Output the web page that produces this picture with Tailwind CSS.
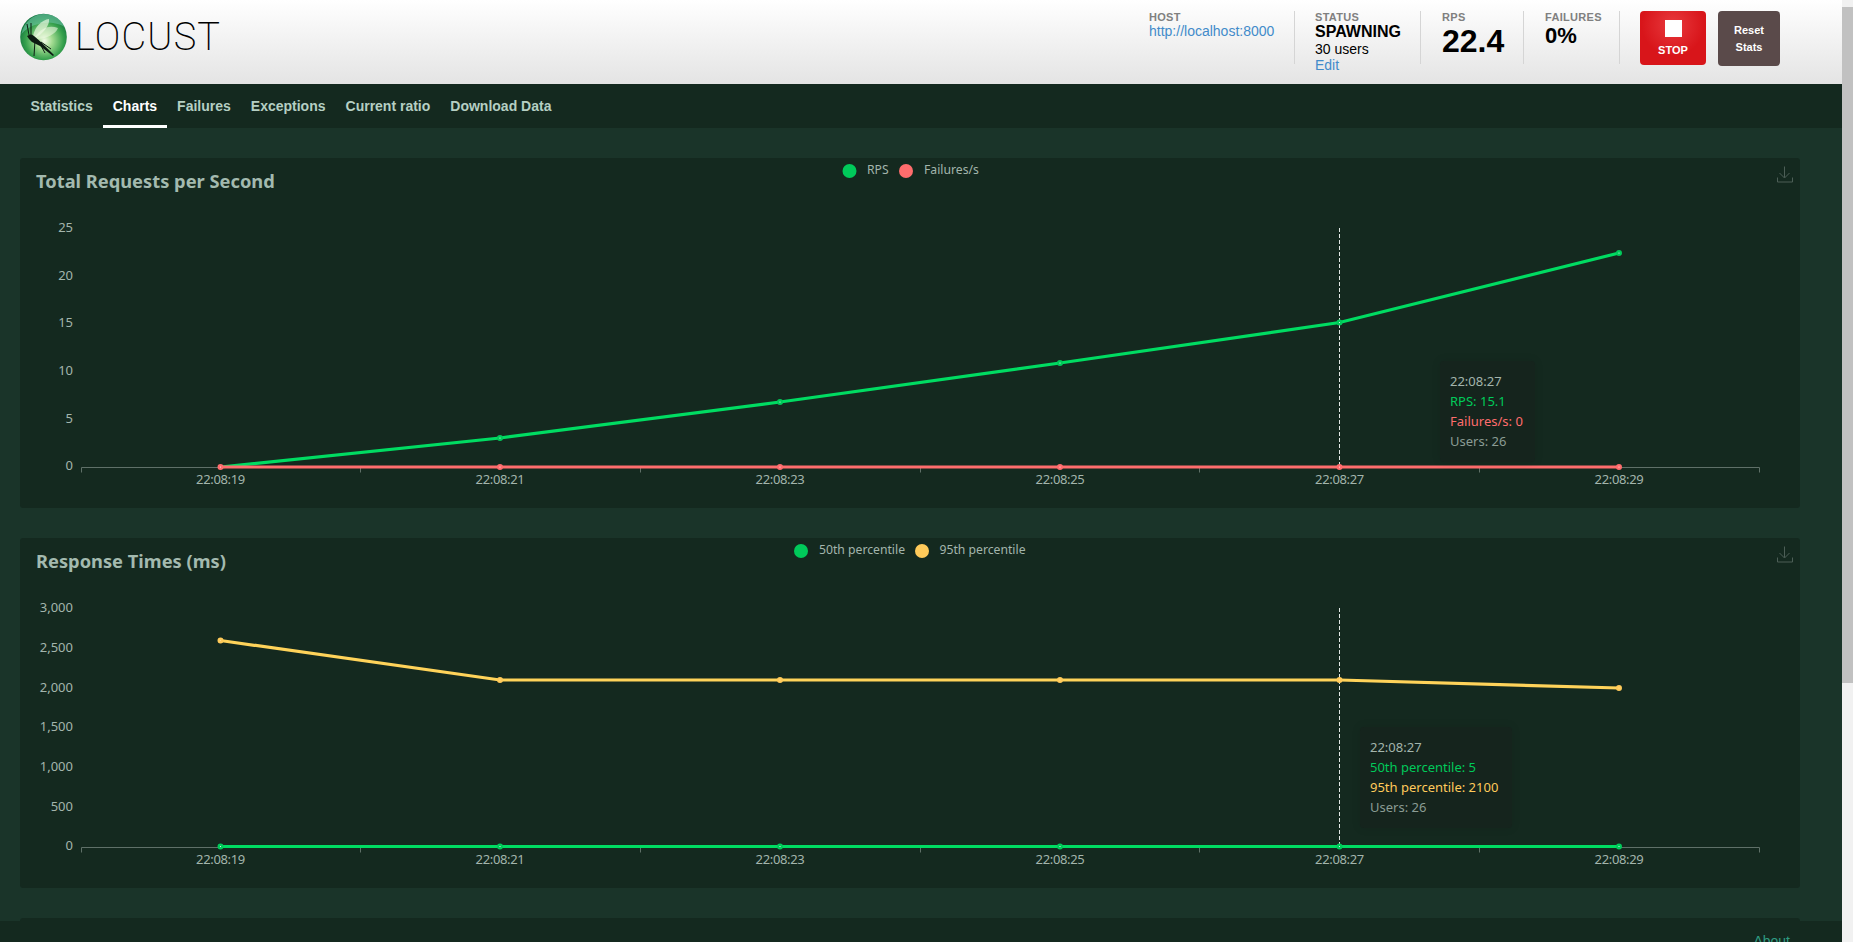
<!DOCTYPE html>
<html>
<head>
<meta charset="utf-8">
<script src="https://cdn.jsdelivr.net/npm/@tailwindcss/browser@4"></script>
</head>
<body class="h-[942px] w-[1853px] overflow-hidden flex bg-[#1a3429] font-['Liberation_Sans',sans-serif]">
<div class="relative flex-1 h-[942px] overflow-hidden flex flex-col">
  <header class="h-[84px] shrink-0 bg-gradient-to-b from-white to-[#e4e4e4] flex justify-between">
    <div class="flex items-center pl-[20px] gap-[8px] h-[74px]">
      <svg width="47" height="48" viewBox="0 0 47 48">
        <defs>
          <radialGradient id="orb" cx="0.52" cy="0.58" r="0.6"><stop offset="0" stop-color="#f4fbe9"/><stop offset="0.28" stop-color="#a4dc92"/><stop offset="0.68" stop-color="#35a04c"/><stop offset="1" stop-color="#0d6c3c"/></radialGradient>
        </defs>
        <circle cx="23.5" cy="24" r="23.3" fill="url(#orb)"/>
        <path d="M1.500 21C4 9 13 1 24 1c9 0 17 5 20.500 13C36 8 14 7 1.500 21z" fill="#6cc4a4" opacity=".6"/>
        <path d="M13 23C15 13 22 7 29 6c1 6-6 15-14 19z" fill="#e8f6de" opacity=".7"/>
        <path d="M15 24C22 14 30 12 38 15c-2 6-12 11-21 11z" fill="#f4fbe9" opacity=".55"/>
        <path d="M7 23l4-2 3 2 8 7 12 12-1 1-13-10-8-4-3-3z" fill="#0c1a12"/>
        <path d="M9 22L7 11M11 21L11 10M15 27L14 43M19 29L25 40M21 29L31 36" stroke="#0c1a12" stroke-width="1" fill="none"/>
      </svg>
      <span class="font-['Roboto',sans-serif] font-extralight text-[38px] leading-none tracking-[1.2px] text-black">LOCUST</span>
    </div>
    <div class="flex items-start pt-[11px] pr-[62px]">
      <div class="w-[147px] pl-[1px] h-[53px] border-r border-[#d5d5d5] flex flex-col">
        <span class="text-[11px] leading-[12px] font-bold tracking-[0.3px] text-[#808080]">HOST</span>
        <a class="text-[14px] leading-[16px] text-[#428bca]">http://localhost:8000</a>
      </div>
      <div class="w-[126px] pl-[20px] h-[53px] border-r border-[#d5d5d5] flex flex-col">
        <span class="text-[11px] leading-[12px] font-bold tracking-[0.3px] text-[#808080]">STATUS</span>
        <span class="text-[16px] leading-[17px] font-bold text-black">SPAWNING</span>
        <span class="text-[14px] leading-[18px] text-black">30 users</span>
        <a class="text-[14px] leading-[15px] text-[#428bca]">Edit</a>
      </div>
      <div class="w-[103px] pl-[21px] h-[53px] border-r border-[#d5d5d5] flex flex-col">
        <span class="text-[11px] leading-[12px] font-bold tracking-[0.3px] text-[#808080]">RPS</span>
        <span class="text-[32px] leading-[36px] font-bold text-black">22.4</span>
      </div>
      <div class="w-[96px] pl-[21px] h-[53px] border-r border-[#d5d5d5] flex flex-col">
        <span class="text-[11px] leading-[12px] font-bold tracking-[0.3px] text-[#808080]">FAILURES</span>
        <span class="text-[22px] leading-[26px] font-bold text-black">0%</span>
      </div>
      <div class="ml-[20px] w-[66px] h-[54px] rounded-[4px] bg-[radial-gradient(circle_at_50%_25%,#e8393d,#d8151a_60%)] flex flex-col items-center pt-[9px]">
        <div class="w-[17px] h-[17px] bg-white"></div>
        <span class="mt-[7px] text-[11px] leading-[13px] font-bold text-white">STOP</span>
      </div>
      <div class="ml-[12px] w-[62px] h-[55px] rounded-[4px] bg-[#5a4a4a] flex flex-col items-center justify-center gap-[4px] pt-[1px]">
        <span class="text-[11px] leading-[13px] font-bold text-white">Reset</span>
        <span class="text-[11px] leading-[13px] font-bold text-white">Stats</span>
      </div>
    </div>
  </header>
  <nav class="h-[44px] shrink-0 bg-[#14291f] flex pl-[20.5px] text-[14px] font-bold text-[#b5cfc3]">
    <a class="px-[10px] pt-[12px]">Statistics</a>
    <a class="px-[10px] pt-[12px] text-white border-b-[3px] border-white">Charts</a>
    <a class="px-[10px] pt-[12px]">Failures</a>
    <a class="px-[10px] pt-[12px]">Exceptions</a>
    <a class="px-[10px] pt-[12px]">Current ratio</a>
    <a class="px-[10px] pt-[12px]">Download Data</a>
  </nav>
  <main class="pt-[30px] pl-[20px] pr-[42px] flex flex-col gap-[30px]">
    <section class="relative h-[350px] shrink-0 rounded-[3px] bg-[#14291f] font-['Noto_Sans',sans-serif]">
      <svg class="absolute left-0 top-0" width="1780" height="350" viewBox="20 158 1780 350" font-size="13" fill="#a3b5ac">
        <text x="36" y="187.500" font-size="18.300" font-weight="700" fill="#a3baaf">Total Requests per Second</text>
        <circle cx="849.500" cy="171" r="7" fill="#00ca5a"/><text x="867" y="174" font-size="12.200">RPS</text>
        <circle cx="906" cy="171" r="7" fill="#ff6d6d"/><text x="924" y="174" font-size="12.200">Failures/s</text>
        <g transform="translate(1777 166.500)" fill="none" stroke="#4d5f57" stroke-width="1"><path d="M7.500 0v11M2.500 6.500l5 5 5-5M.5 11v4.500h15V11"/></g>
        <g text-anchor="end">
          <text x="73" y="232.200">25</text><text x="73" y="279.800">20</text><text x="73" y="327.400">15</text><text x="73" y="375">10</text><text x="73" y="422.600">5</text><text x="73" y="470.200">0</text>
        </g>
        <path d="M81.500 467.500H1759.500M81.500 467.500v5M360.500 467.500v5M640.500 467.500v5M920.500 467.500v5M1199.500 467.500v5M1479.500 467.500v5M1759.500 467.500v5" stroke="#5f7068" fill="none"/>
        <path d="M1339.500 228V467" stroke="#e0e6e3" stroke-dasharray="4 2" fill="none"/>
        <polyline points="220.500,467 500,438 780,402 1060,363 1339.500,322.500 1619,253" fill="none" stroke="#00dc62" stroke-width="3.200"/>
        <polyline points="220.500,467 500,467 780,467 1060,467 1339.500,467 1619,467" fill="none" stroke="#ff6d6d" stroke-width="3.200"/>
        <g fill="#e8fff0" stroke="#00ca5a" stroke-width="2.400"><circle cx="500" cy="438" r="1.800"/><circle cx="780" cy="402" r="1.800"/><circle cx="1060" cy="363" r="1.800"/><circle cx="1339.500" cy="322.500" r="1.800"/><circle cx="1619" cy="253" r="1.800"/></g>
        <g fill="#ffe9e9" stroke="#ff6d6d" stroke-width="2.400"><circle cx="220.500" cy="467" r="1.800"/><circle cx="500" cy="467" r="1.800"/><circle cx="780" cy="467" r="1.800"/><circle cx="1060" cy="467" r="1.800"/><circle cx="1339.500" cy="467" r="1.800"/><circle cx="1619" cy="467" r="1.800"/></g>
        <g text-anchor="middle" letter-spacing="-0.35"><text x="220.500" y="484">22:08:19</text><text x="500" y="484">22:08:21</text><text x="780" y="484">22:08:23</text><text x="1060" y="484">22:08:25</text><text x="1339.500" y="484">22:08:27</text><text x="1619" y="484">22:08:29</text></g>
      </svg>
      <div class="absolute left-[1420px] top-[203px] w-[95px] h-[101px] rounded-[4px] bg-[#15241d] shadow-[0_0_10px_rgba(0,0,0,0.1)] px-[10px] pt-[10px] text-[13px] leading-[20px] whitespace-nowrap">
        <div class="text-[#a3b5ac]">22:08:27</div>
        <div class="text-[#00ca5a]">RPS: 15.1</div>
        <div class="text-[#ff6d6d]">Failures/s: 0</div>
        <div class="text-[#8a9c94]">Users: 26</div>
      </div>
    </section>
    <section class="relative h-[350px] shrink-0 rounded-[3px] bg-[#14291f] font-['Noto_Sans',sans-serif]">
      <svg class="absolute left-0 top-0" width="1780" height="350" viewBox="20 538 1780 350" font-size="13" fill="#a3b5ac">
        <text x="36" y="567.500" font-size="18.300" font-weight="700" fill="#a3baaf">Response Times (ms)</text>
        <circle cx="801" cy="551" r="7" fill="#00ca5a"/><text x="819" y="554" font-size="12.200">50th percentile</text>
        <circle cx="922" cy="551" r="7" fill="#ffca5a"/><text x="939.500" y="554" font-size="12.200">95th percentile</text>
        <g transform="translate(1777 546.500)" fill="none" stroke="#4d5f57" stroke-width="1"><path d="M7.500 0v11M2.500 6.500l5 5 5-5M.5 11v4.500h15V11"/></g>
        <g text-anchor="end">
          <text x="73" y="612.200">3,000</text><text x="73" y="651.900">2,500</text><text x="73" y="691.500">2,000</text><text x="73" y="731.200">1,500</text><text x="73" y="770.900">1,000</text><text x="73" y="810.500">500</text><text x="73" y="850.200">0</text>
        </g>
        <path d="M81.500 847.500H1759.500M81.500 847.500v5M360.500 847.500v5M640.500 847.500v5M920.500 847.500v5M1199.500 847.500v5M1479.500 847.500v5M1759.500 847.500v5" stroke="#5f7068" fill="none"/>
        <path d="M1339.500 608V847" stroke="#e0e6e3" stroke-dasharray="4 2" fill="none"/>
        <polyline points="220.500,640.500 500,680 780,680 1060,680 1339.500,680 1619,688" fill="none" stroke="#ffd35a" stroke-width="3.200"/>
        <polyline points="220.500,846.500 500,846.500 780,846.500 1060,846.500 1339.500,846.500 1619,846.500" fill="none" stroke="#00dc62" stroke-width="3.200"/>
        <g fill="#ffe2a0" stroke="#ffca5a" stroke-width="2.400"><circle cx="220.500" cy="640.500" r="1.800"/><circle cx="500" cy="680" r="1.800"/><circle cx="780" cy="680" r="1.800"/><circle cx="1060" cy="680" r="1.800"/><circle cx="1339.500" cy="680" r="1.800"/><circle cx="1619" cy="688" r="1.800"/></g>
        <g fill="#e8fff0" stroke="#00ca5a" stroke-width="2.400"><circle cx="220.500" cy="846.500" r="1.800"/><circle cx="500" cy="846.500" r="1.800"/><circle cx="780" cy="846.500" r="1.800"/><circle cx="1060" cy="846.500" r="1.800"/><circle cx="1339.500" cy="846.500" r="1.800"/><circle cx="1619" cy="846.500" r="1.800"/></g>
        <g text-anchor="middle" letter-spacing="-0.35"><text x="220.500" y="864">22:08:19</text><text x="500" y="864">22:08:21</text><text x="780" y="864">22:08:23</text><text x="1060" y="864">22:08:25</text><text x="1339.500" y="864">22:08:27</text><text x="1619" y="864">22:08:29</text></g>
      </svg>
      <div class="absolute left-[1340px] top-[189px] w-[152px] h-[101px] rounded-[4px] bg-[#15241d] shadow-[0_0_10px_rgba(0,0,0,0.1)] px-[10px] pt-[10px] text-[13px] leading-[20px] whitespace-nowrap">
        <div class="text-[#a3b5ac]">22:08:27</div>
        <div class="text-[#00ca5a]">50th percentile: 5</div>
        <div class="text-[#ffca5a]">95th percentile: 2100</div>
        <div class="text-[#8a9c94]">Users: 26</div>
      </div>
    </section>
    <section class="h-[350px] shrink-0 rounded-[3px] bg-[#14291f]"></section>
  </main>
  <footer class="absolute left-0 right-0 bottom-0 h-[21px] bg-[#14291f] flex justify-end pr-[52px] pt-[12px] text-[14px] leading-[16px] text-[#2f9c82]">
    <a>About</a>
  </footer>
</div>
<div class="w-[11px] h-[942px] shrink-0 bg-[#f1f1f1] flex flex-col">
  <div class="h-[7px] shrink-0"></div>
  <div class="h-[676px] shrink-0 bg-[#c1c1c1]"></div>
</div>
</body>
</html>
